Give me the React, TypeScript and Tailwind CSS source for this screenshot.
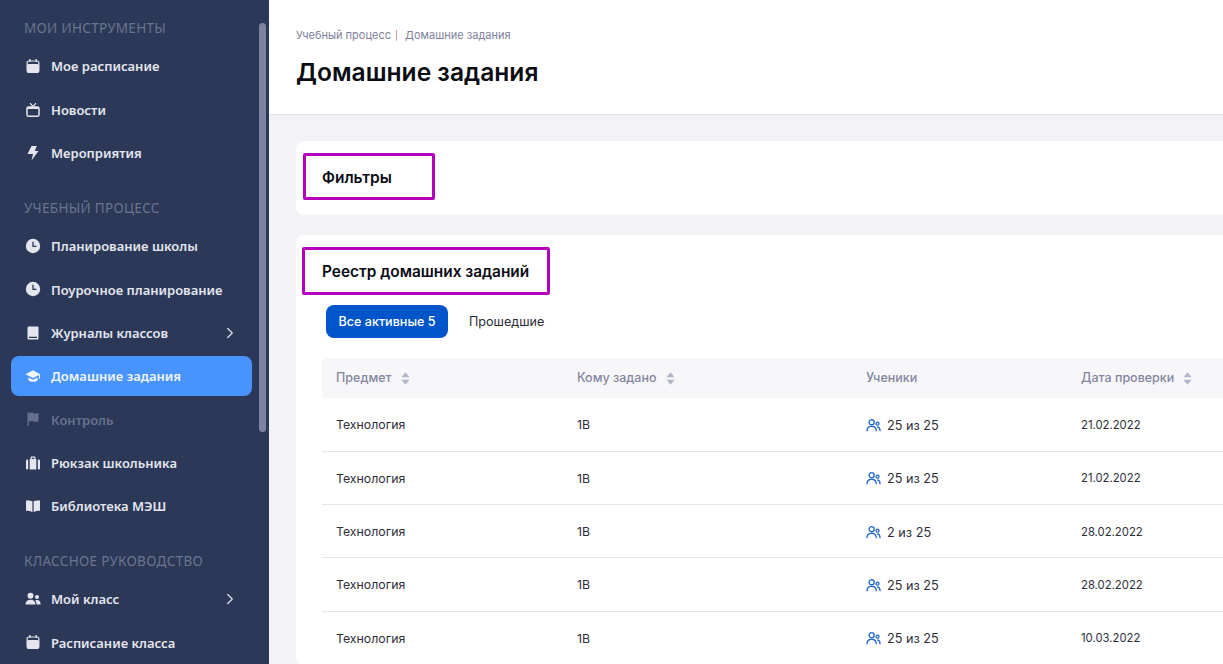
import React from 'react';
import { ChevronRight } from 'lucide-react';

const iconClass = 'w-[16px] h-[16px] shrink-0';

const CalendarIcon = () => (
  <svg viewBox="0 0 16 16" className={iconClass} fill="currentColor">
    <rect x="2.100" y="3" width="11.800" height="11.500" rx="1.800" fill="none" stroke="currentColor" strokeWidth="1.200" />
    <rect x="2" y="6" width="12" height="8.600" rx="1.500" />
    <rect x="4.200" y="1" width="1.300" height="3" />
    <rect x="10.500" y="1" width="1.300" height="3" />
  </svg>
);

const TvIcon = () => (
  <svg viewBox="0 0 16 16" className={iconClass} fill="none" stroke="currentColor" strokeWidth="1.500">
    <rect x="2" y="5" width="12" height="9.200" rx="1.500" />
    <path d="M5 1.200 8 4.500l3-3.300" strokeWidth="1.200" />
    <path d="M2 6h12" strokeWidth="2" />
  </svg>
);

const BoltIcon = () => (
  <svg viewBox="0 0 16 16" className={iconClass} fill="currentColor">
    <path d="M6.500 1h5.300L9.800 6h3.700L6.500 15.500 8 9H2.500z" />
  </svg>
);

const ClockIcon = () => (
  <svg viewBox="0 0 16 16" className={iconClass}>
    <circle cx="8" cy="8" r="7.200" fill="currentColor" />
    <path d="M8 3.800V8.300h3.400" fill="none" stroke="#2c3857" strokeWidth="1.300" />
  </svg>
);

const BookIcon = () => (
  <svg viewBox="0 0 16 16" className={iconClass} fill="currentColor">
    <path d="M3.800 1.500h8.700c.6 0 1 .4 1 1v11c0 .6-.4 1-1 1H3.800a1.300 1.300 0 0 1-1.300-1.300V2.800c0-.7.600-1.300 1.300-1.300zM4 11.800v1.200h8v-1.200z" fillRule="evenodd" />
  </svg>
);

const CapIcon = () => (
  <svg viewBox="0 0 16 16" className={iconClass} fill="currentColor">
    <path d="M8 2.300 0.500 6.200 8 10l6-3v3.800h1V6.300z" />
    <path d="M3.400 9.400v2.500c0 .8 2.200 1.900 4.600 1.900s4.600-1.100 4.600-1.900V9.400L8 11.700z" />
  </svg>
);

const FlagIcon = () => (
  <svg viewBox="0 0 16 16" className={iconClass} fill="currentColor">
    <path d="M2.500 1.500h1.300v.6c1.200-.6 2.800-.8 4.300-.2 1.700.7 3.200.8 5.400 0v8.300c-2.200.9-3.800.8-5.400.1-1.500-.6-3-.5-4.300.2v4.500H2.500z" />
  </svg>
);

const BagIcon = () => (
  <svg viewBox="0 0 16 16" className={iconClass} fill="currentColor">
    <path d="M5.500 4V2.800c0-.8.600-1.300 1.300-1.300h2.400c.7 0 1.300.5 1.300 1.300V4h.8v10.500H4.700V4zm1.200 0h2.600V2.700H6.700z" fillRule="evenodd" />
    <rect x="1" y="4.500" width="2.200" height="10" rx="1" />
    <rect x="12.800" y="4.500" width="2.200" height="10" rx="1" />
  </svg>
);

const OpenBookIcon = () => (
  <svg viewBox="0 0 16 16" className={iconClass} fill="currentColor">
    <path d="M7.400 3.200v11C5.700 13.200 3.500 12.800 1 12.800V2.500c2.700-.1 4.900 0 6.400.7z" />
    <path d="M8.600 3.200v11c1.700-1 3.900-1.400 6.400-1.400V2.500c-2.700-.1-4.900 0-6.400.7z" />
  </svg>
);

const PeopleIcon = () => (
  <svg viewBox="0 0 16 16" className={iconClass} fill="currentColor">
    <circle cx="5.500" cy="4.700" r="3" />
    <path d="M.5 13.500c0-3 2-4.800 5-4.800s5 1.800 5 4.800z" />
    <circle cx="12" cy="6" r="2" />
    <path d="M11.500 13.500c0-1.700-.4-3.100-1.300-4.200.6-.3 1.200-.4 1.900-.4 2.100 0 3.400 1.400 3.400 3.300v1.300z" />
  </svg>
);

const StudentsIcon = () => (
  <svg viewBox="0 0 16 16" className="w-[15px] h-[15px] shrink-0 text-[#1f66d1]" fill="none" stroke="currentColor" strokeWidth="1.400">
    <circle cx="6" cy="4.500" r="2.700" />
    <circle cx="12.300" cy="6" r="1.600" />
    <path d="M1 14c0-3.200 2-5 5-5s5 1.800 5 5" />
    <path d="M12 9.600c1.900 0 3 1.700 3 4.400" />
  </svg>
);

const SortIcon = () => (
  <svg viewBox="0 0 10 16" className="w-[9px] h-[15px] shrink-0 text-[#b3b6cb]" fill="currentColor">
    <path d="M5 1 9.500 6.500H.5z" />
    <path d="M5 15 .5 9.500h9z" />
  </svg>
);

type NavItem = { label: string; icon: React.ReactNode; arrow?: boolean; active?: boolean; disabled?: boolean };

const NAV: { title: string; items: NavItem[] }[] = [
  {
    title: 'МОИ ИНСТРУМЕНТЫ',
    items: [
      { label: 'Мое расписание', icon: <CalendarIcon /> },
      { label: 'Новости', icon: <TvIcon /> },
      { label: 'Мероприятия', icon: <BoltIcon /> },
    ],
  },
  {
    title: 'УЧЕБНЫЙ ПРОЦЕСС',
    items: [
      { label: 'Планирование школы', icon: <ClockIcon /> },
      { label: 'Поурочное планирование', icon: <ClockIcon /> },
      { label: 'Журналы классов', icon: <BookIcon />, arrow: true },
      { label: 'Домашние задания', icon: <CapIcon />, active: true },
      { label: 'Контроль', icon: <FlagIcon />, disabled: true },
      { label: 'Рюкзак школьника', icon: <BagIcon /> },
      { label: 'Библиотека МЭШ', icon: <OpenBookIcon /> },
    ],
  },
  {
    title: 'КЛАССНОЕ РУКОВОДСТВО',
    items: [
      { label: 'Мой класс', icon: <PeopleIcon />, arrow: true },
      { label: 'Расписание класса', icon: <CalendarIcon /> },
    ],
  },
];

const ROWS = [
  { students: '25 из 25', date: '21.02.2022' },
  { students: '25 из 25', date: '21.02.2022' },
  { students: '2 из 25', date: '28.02.2022' },
  { students: '25 из 25', date: '28.02.2022' },
  { students: '25 из 25', date: '10.03.2022' },
];

const tableCols = 'grid grid-cols-[241px_289px_215px_1fr] pl-[14px] items-center';

const Sidebar = () => (
  <aside className="relative w-[269px] shrink-0 h-full overflow-hidden bg-[#2c3857] pt-[18px] font-['Noto_Sans',sans-serif]">
    {NAV.map((group, i) => (
      <div key={group.title} className={i > 0 ? 'mt-[23px]' : ''}>
        <h3 className="h-[20px] leading-[20px] pl-[24px] mb-[6.500px] text-[13.500px] tracking-[0.3px] text-[#69758f]">{group.title}</h3>
        {group.items.map((item) => (
          <div key={item.label} className="h-[43.400px] flex items-center">
            <div
              className={
                'ml-[11px] w-[241px] h-[40px] rounded-[8px] pl-[14px] pr-[13px] flex items-center gap-[10px] text-[13px] font-semibold ' +
                (item.active ? 'bg-[#4794ff] text-[#f2f5fb]' : item.disabled ? 'text-[#66718e]' : 'text-[#e3e6ef]')
              }
            >
              {item.icon}
              <span className="flex-1 pt-[2px] whitespace-nowrap">{item.label}</span>
              {item.arrow && <ChevronRight className="w-[18px] h-[18px] text-[#d5d9e4]" strokeWidth={1.800} />}
            </div>
          </div>
        ))}
      </div>
    ))}
    {/* scrollbar thumb */}
    <div className="absolute left-[259px] top-[23px] w-[7px] h-[409px] rounded-full bg-[#7c849f]" />
  </aside>
);

export default function App() {
  return (
    <div className="flex h-screen w-full overflow-hidden bg-[#f2f2f7] font-['Inter',sans-serif]">
      <Sidebar />
      <main className="flex-1 min-w-0 h-full overflow-hidden">
        <header className="h-[115px] bg-white border-b border-[#e3e3ec] pl-[27px] pt-[28px]">
          <div className="flex items-center h-[15px] text-[11px] text-[#7d7f9b]">
            <span>Учебный процесс</span>
            <span className="w-px h-[11px] bg-[#e0a58f] ml-[5px] mr-[8px]" />
            <span>Домашние задания</span>
          </div>
          <h1 className="mt-[12px] text-[24.600px] leading-[34px] font-semibold text-[#0b0b14]">Домашние задания</h1>
        </header>

        <div className="pl-[27px] pt-[26px]">
          <section className="h-[74px] bg-white rounded-l-[8px] pt-[12px] pl-[7px]">
            <div className="w-[132px] h-[47px] border-[3px] border-[#b400ba] rounded-[2px] pl-[16px] pt-[3px] flex items-center text-[15.500px] font-semibold text-[#0b0b14]">
              Фильтры
            </div>
          </section>

          <section className="mt-[20px] bg-white rounded-l-[8px] pt-[12px]">
            <div className="ml-[6px] w-[248px] h-[48px] border-[3px] border-[#b400ba] rounded-[2px] pl-[17px] pt-[2px] flex items-center text-[15.400px] font-semibold text-[#0b0b14]">
              Реестр домашних заданий
            </div>
            <div className="ml-[30px] mt-[10px] flex items-center h-[33px] text-[12.600px]">
              <div className="w-[122px] h-[33px] pt-[1px] rounded-[8px] bg-[#0055cb] text-white flex items-center justify-center font-medium">Все активные 5</div>
              <div className="ml-[21px] pt-[1px] text-[#2b2b3a]">Прошедшие</div>
            </div>

            <div className="ml-[26px] mt-[20px]">
              <div className={tableCols + ' h-[40.200px] bg-[#f7f7fa] text-[12.500px] font-medium text-[#84869f]'}>
                <div className="flex items-center gap-[9px]">Предмет <SortIcon /></div>
                <div className="flex items-center gap-[9px]">Кому задано <SortIcon /></div>
                <div>Ученики</div>
                <div className="flex items-center gap-[9px]">Дата проверки <SortIcon /></div>
              </div>
              {ROWS.map((row, i) => (
                <div key={i} className={tableCols + ' h-[53.400px] pt-[2px] border-b border-[#e5e5ea] text-[12.300px] text-[#2d2d3a]'}>
                  <div>Технология</div>
                  <div>1В</div>
                  <div className="flex items-center gap-[6px] text-[12.700px]"><StudentsIcon /> {row.students}</div>
                  <div className="text-[11.300px]">{row.date}</div>
                </div>
              ))}
            </div>
          </section>
        </div>
      </main>
    </div>
  );
}
